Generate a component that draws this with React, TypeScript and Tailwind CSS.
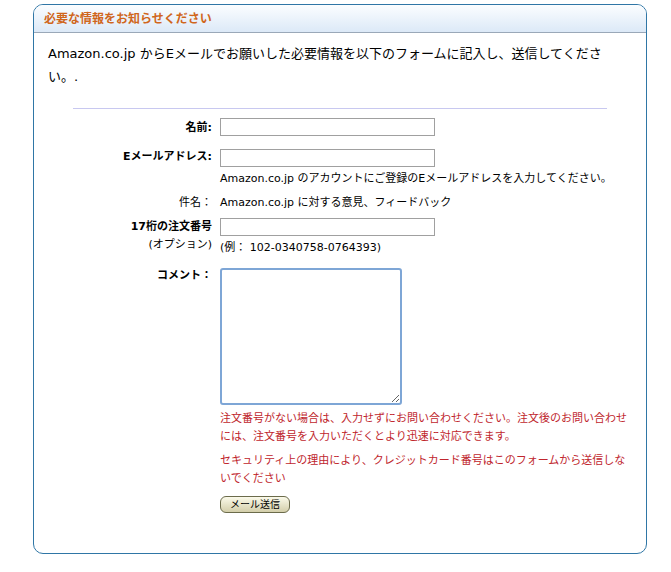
export default function App() {
  const f = { fontFamily: '"DejaVu Sans", "Noto Sans CJK JP", sans-serif' };
  return (
    <div className="w-[671px] h-[572px] bg-white pt-[4px] pl-[33px]" style={f}>
      <div className="w-[614px] h-[550px] border border-[#2f76a6] rounded-[10px] overflow-hidden">
        <div className="h-[28px] bg-gradient-to-b from-[#fbfdff] to-[#dce9f7] border-b border-[#9aa8b8] flex items-center pl-[10px] text-[12px] font-bold text-[#d0661c]">
          必要な情報をお知らせください
        </div>
        <div className="pl-[14px] pr-[30px] pt-[9px] text-[13px] leading-[23px] text-black">
          Amazon.co.jp からEメールでお願いした必要情報を以下のフォームに記入し、送信してください。.
        </div>
        <div className="mx-[39px] mt-[20px] border-t border-[#c8c8f0]" />
        <div className="text-[11px] text-black mt-[9px]">
          <div className="flex items-start">
            <div className="w-[178px] text-right font-bold pt-[2px]">名前:</div>
            <input className="ml-[8px] w-[215px] h-[18px] border border-[#a0a0a0]" />
          </div>
          <div className="flex items-start mt-[12px]">
            <div className="w-[178px] text-right font-bold pt-[0px]">Eメールアドレス:</div>
            <div className="ml-[8px]">
              <input className="w-[215px] h-[18px] border border-[#a0a0a0] block" />
              <div className="mt-[4px]">Amazon.co.jp のアカウントにご登録のEメールアドレスを入力してください。</div>
            </div>
          </div>
          <div className="flex items-start mt-[8px]">
            <div className="w-[178px] text-right">件名：</div>
            <div className="ml-[8px]">Amazon.co.jp に対する意見、フィードバック</div>
          </div>
          <div className="flex items-start mt-[6px]">
            <div className="w-[178px] text-right leading-[18px]">
              <div className="font-bold">17桁の注文番号</div>
              <div>(オプション)</div>
            </div>
            <div className="ml-[8px]">
              <input className="w-[215px] h-[18px] border border-[#a0a0a0] block" />
              <div className="mt-[4px]">(例： 102-0340758-0764393)</div>
            </div>
          </div>
          <div className="flex items-start mt-[12px]">
            <div className="w-[178px] text-right font-bold pt-[0px]">コメント：</div>
            <div className="ml-[8px] w-[410px]">
              <textarea className="w-[182px] h-[137px] border-2 border-[#7ea6d6] rounded-[3px] block resize-y" />
              <div className="text-[#c0262d] leading-[18px] mt-[5px]">
                注文番号がない場合は、入力せずにお問い合わせください。注文後のお問い合わせには、注文番号を入力いただくとより迅速に対応できます。
              </div>
              <div className="text-[#c0262d] leading-[18px] mt-[6px]">
                セキュリティ上の理由により、クレジットカード番号はこのフォームから送信しないでください
              </div>
              <button className="mt-[8px] w-[70px] h-[17px] rounded-[6px] border border-[#6b6b4b] bg-gradient-to-b from-[#fbfaea] to-[#d3ceaa] text-[10px] leading-[15px]">
                メール送信
              </button>
            </div>
          </div>
        </div>
      </div>
    </div>
  );
}
